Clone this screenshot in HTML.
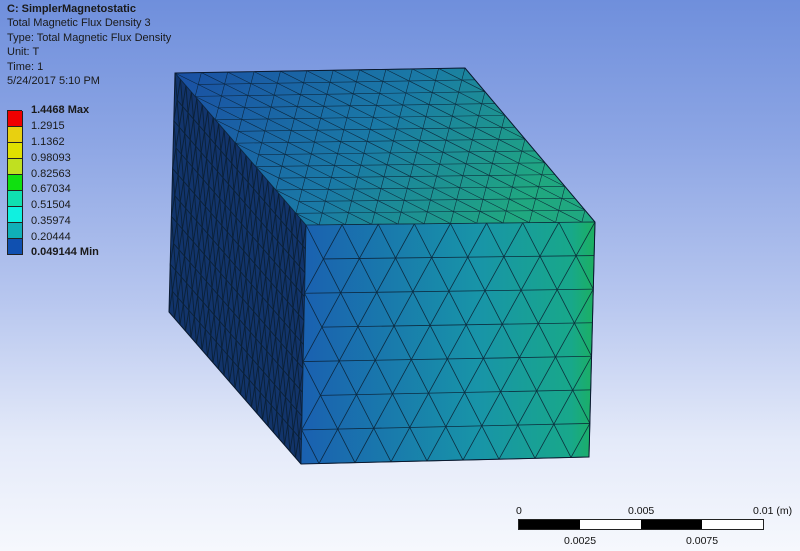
<!DOCTYPE html>
<html><head><meta charset="utf-8"><style>
html,body{margin:0;padding:0}
body{width:800px;height:551px;overflow:hidden;position:relative;font-family:"Liberation Sans",sans-serif;
background:linear-gradient(to bottom,#6f8fdc 0%,#8ca5e4 25%,#b8c7ef 55%,#e4eaf9 80%,#f6f8fd 100%);}
.t{position:absolute;left:7px;font-size:11px;color:#1a1a1a;white-space:nowrap}
.b{font-weight:bold}
.lab{position:absolute;left:31px;font-size:11px;color:#1a1a1a;white-space:nowrap}
.box{position:absolute;left:7px;width:14px;height:15px;border:1px solid #222;border-top:none}
.s{position:absolute;font-size:10.5px;color:#111;white-space:nowrap}
</style></head><body>
<div class="t b" style="top:3px">C: SimplerMagnetostatic</div>
<div class="t" style="top:17px">Total Magnetic Flux Density 3</div>
<div class="t" style="top:32px">Type: Total Magnetic Flux Density</div>
<div class="t" style="top:46px">Unit: T</div>
<div class="t" style="top:61px">Time: 1</div>
<div class="t" style="top:75px">5/24/2017 5:10 PM</div>

<div style="position:absolute;left:7px;top:110px;width:15px;height:1px;background:#222"></div>
<div class="box" style="top:111px;background:#f00000"></div>
<div class="box" style="top:127px;background:#e8d010"></div>
<div class="box" style="top:143px;background:#e0e000"></div>
<div class="box" style="top:159px;background:#c0e020"></div>
<div class="box" style="top:175px;background:#10e010"></div>
<div class="box" style="top:191px;background:#10e0b0"></div>
<div class="box" style="top:207px;background:#10f0e0"></div>
<div class="box" style="top:223px;background:#10b0b8"></div>
<div class="box" style="top:239px;background:#1050b0"></div>

<div class="lab b" style="top:104px">1.4468 Max</div>
<div class="lab" style="top:120px">1.2915</div>
<div class="lab" style="top:136px">1.1362</div>
<div class="lab" style="top:152px">0.98093</div>
<div class="lab" style="top:168px">0.82563</div>
<div class="lab" style="top:183px">0.67034</div>
<div class="lab" style="top:199px">0.51504</div>
<div class="lab" style="top:215px">0.35974</div>
<div class="lab" style="top:231px">0.20444</div>
<div class="lab b" style="top:246px">0.049144 Min</div>

<svg id="cube" width="800" height="551" style="position:absolute;left:0;top:0">
<defs>
<linearGradient id="gf" x1="0" y1="0" x2="1" y2="0">
<stop offset="0" stop-color="#1a60b0"/><stop offset="0.6" stop-color="#1894a8"/><stop offset="0.92" stop-color="#18a88a"/><stop offset="1" stop-color="#1cb060"/></linearGradient>
<linearGradient id="gt" x1="0" y1="0" x2="1" y2="0.3">
<stop offset="0" stop-color="#1a4ea4"/><stop offset="0.55" stop-color="#1a7aa6"/><stop offset="1" stop-color="#20a880"/></linearGradient>
<linearGradient id="gl" x1="0" y1="0" x2="0" y2="1">
<stop offset="0" stop-color="#12346c"/><stop offset="1" stop-color="#12346a"/></linearGradient>
</defs>
<polygon points="175,73 306,225 301,464 169,312" fill="url(#gl)"/>
<polygon points="175,73 465,68 595,222 306,225" fill="url(#gt)"/>
<polygon points="306,225 595,222 589,457 301,464" fill="url(#gf)"/>
<g id="mesh" stroke="#0a1e30" stroke-width="0.8" fill="none" opacity="0.85"></g>
<polygon points="175,73 465,68 595,222 589,457 301,464 169,312" fill="none" stroke="#0a1a30" stroke-width="1"/>
</svg>

<div class="s" style="left:516px;top:505px">0</div>
<div class="s" style="left:628px;top:505px">0.005</div>
<div class="s" style="left:753px;top:505px">0.01 (m)</div>
<div style="position:absolute;left:518px;top:519px;width:244px;height:9px;border:1px solid #222;background:#fff"></div>
<div style="position:absolute;left:519px;top:520px;width:61px;height:9px;background:#000"></div>
<div style="position:absolute;left:641px;top:520px;width:61px;height:9px;background:#000"></div>
<div class="s" style="left:564px;top:535px">0.0025</div>
<div class="s" style="left:686px;top:535px">0.0075</div>

<script>
(function(){
var g=document.getElementById('mesh'),ns='http://www.w3.org/2000/svg';
function bl(P,u,v){return [P[0][0]*(1-u)*(1-v)+P[1][0]*u*(1-v)+P[2][0]*u*v+P[3][0]*(1-u)*v,
P[0][1]*(1-u)*(1-v)+P[1][1]*u*(1-v)+P[2][1]*u*v+P[3][1]*(1-u)*v];}
function L(a,b,w){var l=document.createElementNS(ns,'line');l.setAttribute('x1',a[0]);l.setAttribute('y1',a[1]);l.setAttribute('x2',b[0]);l.setAttribute('y2',b[1]);if(w)l.setAttribute('stroke-width',w);g.appendChild(l);}
function tri(P,nx,ny,w){
 var N=[];
 for(var j=0;j<=ny;j++){N[j]=[];for(var i=0;i<=nx;i++){var off=(j%2)?0.5:0;var u=Math.min(1,Math.max(0,(i+off)/nx));N[j][i]=bl(P,u,j/ny);}}
 for(var j=0;j<=ny;j++)L(N[j][0],N[j][nx],w);
 for(var j=0;j<ny;j++)for(var i=0;i<=nx;i++){
  L(N[j][i],N[j+1][i],w);
  if(j%2==0){if(i>0)L(N[j][i],N[j+1][i-1],w);}else{if(i<nx)L(N[j][i],N[j+1][i+1],w);}
 }
}
tri([[306,225],[595,222],[589,457],[301,464]],8,7,0.8);
tri([[175,73],[465,68],[595,222],[306,225]],11,13,0.6);
tri([[175,73],[306,225],[301,464],[169,312]],24,10,0.9);
})();
</script>
</body></html>
